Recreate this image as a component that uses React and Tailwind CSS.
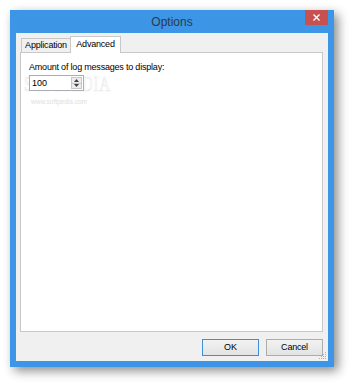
export default function App() {
  const font = { fontFamily: '"Liberation Sans", Arial, sans-serif' };
  return (
    <div className="w-[350px] h-[384px] bg-white pt-[10px] pl-[10px]" style={font}>
      <div className="w-[324px] h-[357px] bg-[#3d95e6] flex flex-col shadow-[4px_4px_10px_rgba(0,0,0,0.45)]">
        <div className="h-[23px] relative flex items-center justify-center">
          <span className="text-[12px] text-[#2a3a4a] leading-none mt-[1px]">Options</span>
          <div className="absolute right-[6px] top-0 w-[23px] h-[15px] bg-[#c75050] flex items-center justify-center">
            <svg width="7" height="7" viewBox="0 0 7 7">
              <path d="M0.5 0.5 L6.5 6.5 M6.5 0.5 L0.5 6.5" stroke="white" strokeWidth="1.4" />
            </svg>
          </div>
        </div>
        <div className="mx-[6px] mb-[6px] flex-1 bg-[#f0f0f0] flex flex-col">
          <div className="flex items-end h-[19px] pl-[5px] relative z-10">
            <div className="w-[50px] h-[14px] border border-b-0 border-[#c8c8c8] bg-[#f0f0f0] flex items-center justify-center text-[9px] tracking-[-0.2px] text-black leading-none">
              Application
            </div>
            <div className="w-[51px] h-[17px] border border-b-0 border-[#c8c8c8] bg-white flex items-start justify-center pt-[3px] text-[9px] tracking-[-0.2px] text-black leading-none -mb-[1px] -ml-[1px]">
              Advanced
            </div>
          </div>
          <div className="ml-[4px] mr-[5px] h-[280px] bg-white border border-[#c8c8c8] relative pl-[8px] pt-[10px]">
            <div className="absolute left-[3px] top-[20px] text-[22px] leading-none tracking-[1px] text-white pointer-events-none origin-left scale-x-[0.68]" style={{ fontFamily: '"Liberation Serif", serif', WebkitTextStroke: '0.6px #e6e6e6' }}>
              SOFTPEDIA
            </div>
            <div className="absolute left-[10px] top-[46px] text-[6.5px] text-[#dedede] leading-none">www.softpedia.com</div>
            <div className="relative text-[9px] tracking-[-0.2px] text-black leading-none">Amount of log messages to display:</div>
            <div className="relative mt-[3px] w-[55px] h-[16px] border border-[#abadb3] flex bg-white">
              <div className="flex-1 text-[9px] leading-none text-black pl-[2px] pt-[3px]">100</div>
              <div className="w-[11px] flex flex-col border border-[#c8c8c8] my-[1px] mr-[1px]">
                <div className="flex-1 flex items-center justify-center bg-[#ececec] border-b border-[#c8c8c8]">
                  <svg width="5" height="3" viewBox="0 0 5 3"><path d="M2.5 0 L5 3 L0 3 Z" fill="#404040" /></svg>
                </div>
                <div className="flex-1 flex items-center justify-center bg-[#ececec]">
                  <svg width="5" height="3" viewBox="0 0 5 3"><path d="M0 0 L5 0 L2.5 3 Z" fill="#404040" /></svg>
                </div>
              </div>
            </div>
          </div>
          <div className="flex-1 flex items-start justify-end pt-[7px] pr-[5px] gap-[7px] relative">
            <div className="w-[57px] h-[17px] border border-[#3c8fd8] bg-gradient-to-b from-[#f2f2f2] to-[#e3e3e3] flex items-center justify-center text-[9px] text-black leading-none">OK</div>
            <div className="w-[57px] h-[17px] border border-[#acacac] bg-gradient-to-b from-[#f2f2f2] to-[#e3e3e3] flex items-center justify-center text-[9px] tracking-[-0.2px] text-black leading-none">Cancel</div>
            <svg className="absolute right-[1px] bottom-[1px]" width="8" height="8" viewBox="0 0 8 8">
              <rect x="6" y="0" width="1" height="1" fill="#b0b0b0" />
              <rect x="4" y="2" width="1" height="1" fill="#b0b0b0" />
              <rect x="6" y="2" width="1" height="1" fill="#b0b0b0" />
              <rect x="2" y="4" width="1" height="1" fill="#b0b0b0" />
              <rect x="4" y="4" width="1" height="1" fill="#b0b0b0" />
              <rect x="6" y="4" width="1" height="1" fill="#b0b0b0" />
              <rect x="0" y="6" width="1" height="1" fill="#b0b0b0" />
              <rect x="2" y="6" width="1" height="1" fill="#b0b0b0" />
              <rect x="4" y="6" width="1" height="1" fill="#b0b0b0" />
              <rect x="6" y="6" width="1" height="1" fill="#b0b0b0" />
            </svg>
          </div>
        </div>
      </div>
    </div>
  );
}
